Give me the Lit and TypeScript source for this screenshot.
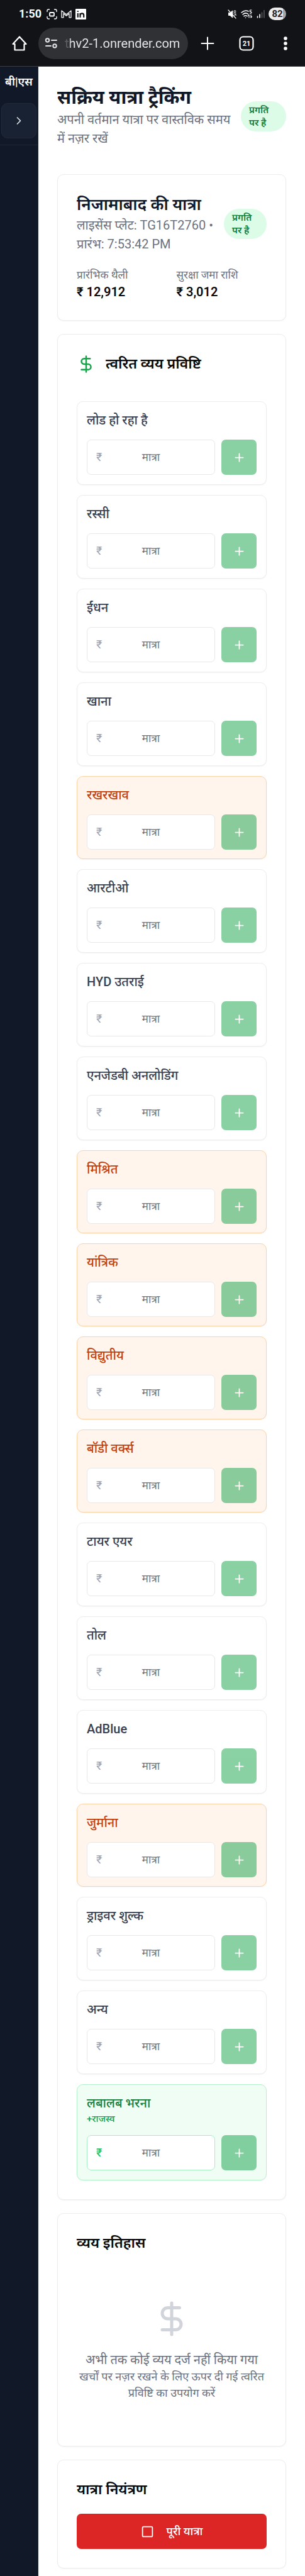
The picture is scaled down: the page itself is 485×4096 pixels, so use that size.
import { LitElement, html, css, svg, nothing } from "lit";
import { customElement, property } from "lit/decorators.js";

type Tone = "plain" | "warn" | "gain";

interface Expense {
  name: string;
  tone: Tone;
  note?: string;
}

const EXPENSES: Expense[] = [
  { name: "लोड हो रहा है", tone: "plain" },
  { name: "रस्सी", tone: "plain" },
  { name: "ईंधन", tone: "plain" },
  { name: "खाना", tone: "plain" },
  { name: "रखरखाव", tone: "warn" },
  { name: "आरटीओ", tone: "plain" },
  { name: "HYD उतराई", tone: "plain" },
  { name: "एनजेडबी अनलोडिंग", tone: "plain" },
  { name: "मिश्रित", tone: "warn" },
  { name: "यांत्रिक", tone: "warn" },
  { name: "विद्युतीय", tone: "warn" },
  { name: "बॉडी वर्क्स", tone: "warn" },
  { name: "टायर एयर", tone: "plain" },
  { name: "तोल", tone: "plain" },
  { name: "AdBlue", tone: "plain" },
  { name: "जुर्माना", tone: "warn" },
  { name: "ड्राइवर शुल्क", tone: "plain" },
  { name: "अन्य", tone: "plain" },
  { name: "लबालब भरना", tone: "gain", note: "+राजस्व" },
];

const dollarShape = svg`<path d="M12 2v20M17 5H9.5a3.5 3.5 0 0 0 0 7h5a3.5 3.5 0 0 1 0 7H6"></path>`;

const base = css`
  * {
    box-sizing: border-box;
    margin: 0;
  }
  button,
  input {
    font: inherit;
    color: inherit;
    border: 0;
    padding: 0;
    background: none;
    min-width: 0;
  }
  svg {
    display: block;
    fill: none;
    stroke: currentColor;
    stroke-width: 2;
    stroke-linecap: round;
    stroke-linejoin: round;
    flex: none;
  }
`;

@customElement("phone-chrome")
export class PhoneChrome extends LitElement {
  static styles = [
    base,
    css`
      :host {
        display: block;
        background: #111317;
        color: #fff;
        border-bottom: 1px solid #3b3d42;
      }
      .status {
        display: flex;
        align-items: center;
        height: 44px;
        padding: 0 30px;
        gap: 6px;
      }
      .time {
        margin-right: 2px;
        font-size: 18px;
        line-height: 24px;
        font-weight: 700;
      }
      .space {
        flex: 1;
      }
      .battery {
        display: flex;
        align-items: center;
        justify-content: center;
        width: 28px;
        height: 20px;
        border-radius: 10px;
        background: linear-gradient(90deg, #ececec 82%, #a5a5a8 82%);
        color: #222326;
        font-size: 15px;
        line-height: 20px;
        font-weight: 700;
      }
      .bar {
        display: flex;
        align-items: center;
        height: 61px;
        padding-bottom: 11px;
      }
      .bar button {
        display: flex;
        justify-content: center;
        flex: 0 0 62px;
      }
      .bar .home {
        flex-basis: 61px;
      }
      .address {
        flex: 1;
        min-width: 0;
        display: flex;
        align-items: center;
        gap: 11px;
        height: 50px;
        padding: 0 10px;
        border-radius: 25px;
        background: #303135;
        color: #e4e4e7;
      }
      .url {
        flex: 1;
        font-size: 20px;
        line-height: 24px;
        -webkit-mask-image: linear-gradient(90deg, rgba(0, 0, 0, 0.25) 5px, #000 10px);
        mask-image: linear-gradient(90deg, rgba(0, 0, 0, 0.25) 5px, #000 10px);
      }
      .tabs text {
        fill: currentColor;
        stroke: none;
        font-size: 11px;
        font-weight: 700;
      }
    `,
  ];

  render() {
    return html`
      <div class="status">
        <span class="time">1:50</span>
        <svg width="17" height="17" viewBox="0 0 17 17">
          <path d="M1 4.5V3a2 2 0 0 1 2-2h1.5M12.500 1H14a2 2 0 0 1 2 2v1.5M16 12.500V14a2 2 0 0 1-2 2h-1.5M4.5 16H3a2 2 0 0 1-2-2v-1.5" stroke-width="1.4"></path>
          <rect x="5" y="6" width="7" height="5.5" rx="1" stroke-width="1.8"></rect>
        </svg>
        <svg width="17" height="14" viewBox="0 0 17 14">
          <path d="M1 12.8V2l7.5 6L16 2v10.8h-3V6.5l-4.5 3.7L4 6.500v6.3z" stroke-width="1.3"></path>
        </svg>
        <svg width="17" height="17" viewBox="0 0 17 17">
          <rect width="17" height="17" rx="1" fill="#fff" stroke="none"></rect>
          <path d="M3.8 7v6.800M3.8 3.300v1.6M7.5 13.800V7M7.5 10c0-3.600 5.700-3.600 5.700 0v3.800" stroke="#111317" stroke-width="2.2" stroke-linecap="butt"></path>
        </svg>
        <span class="space"></span>
        <svg width="15" height="15" viewBox="0 0 15 15">
          <path d="M1.5 5.500v4h2.300l4 3.500V2l-4 3.500z" fill="#fff" stroke-width="1"></path>
          <path d="M1 1l12 13M10 3l1.500-1 1.500 1M10 6l1.500-1L13 6M11 9l1-1 1.500 1" stroke-width="1.2"></path>
        </svg>
        <svg width="19" height="15" viewBox="0 0 19 15">
          <path d="M1 5c4-3.500 8-3.500 11-2M3 8c2.500-2.300 6-2.500 8.500-.7M5 10.700c1.500-1.200 3.500-1.200 5 0M7.500 13.200v.1" stroke-width="1.5"></path>
          <path d="M17 1h-2.500v2.500c3-.6 3.600 3 0 2.700M13 13V8.500l-1.300 1.300M16 8.500V13l1.500-1.500" stroke-width="1.2"></path>
        </svg>
        <svg width="13" height="14" viewBox="0 0 13 14">
          <path d="M1.500 11v2M5 8v5" stroke-width="1.6"></path>
          <path d="M8.500 5v8M12 1.500V13" stroke-width="1.6" stroke="#55575b"></path>
        </svg>
        <span class="battery">82</span>
      </div>
      <div class="bar">
        <button class="home" aria-label="होम">
          <svg width="24" height="24" viewBox="0 0 24 24">
            <path d="M1.500 13 12 1.500l10.500 11.500h-3v9.500h-15V13z" stroke-width="2.2"></path>
          </svg>
        </button>
        <div class="address">
          <svg width="21" height="18" viewBox="0 0 21 18">
            <circle cx="4.5" cy="4" r="2.7"></circle>
            <path d="M11 4h8M2 13h8"></path>
            <circle cx="16" cy="13" r="2.7"></circle>
          </svg>
          <input class="url" aria-label="पता" value="thv2-1.onrender.com" readonly />
        </div>
        <button aria-label="नया टैब">
          <svg width="22" height="22" viewBox="0 0 22 22"><path d="M11 1.500v19M1.500 11h19"></path></svg>
        </button>
        <button class="tabs" aria-label="टैब">
          <svg width="24" height="24" viewBox="0 0 24 24">
            <rect x="1.500" y="1.500" width="21" height="21" rx="5" stroke-width="2.2"></rect>
            <text x="12" y="16" text-anchor="middle">21</text>
          </svg>
        </button>
        <button aria-label="मेनू">
          <svg width="6" height="22" viewBox="0 0 6 22">
            <path d="M3 3v.01M3 11v.01M3 19v.01" stroke-width="5.6"></path>
          </svg>
        </button>
      </div>
    `;
  }
}

@customElement("expense-entry")
export class ExpenseEntry extends LitElement {
  @property({ attribute: false }) expense!: Expense;

  static styles = [
    base,
    css`
      :host {
        display: block;
      }
      .entry {
        padding: 15px;
        border: 1px solid #ededf0;
        border-radius: 10px;
        background: #fff;
        box-shadow: 0 1px 2px rgba(0, 0, 0, 0.05);
        color: #374151;
      }
      .warn {
        padding-bottom: 14px;
        border-color: #fbd3a6;
        background: #fff5ec;
        color: #c2410c;
      }
      .gain {
        border-color: #b4f3cb;
        background: #effdf4;
        color: #15803d;
      }
      label {
        display: block;
        font-size: 20px;
        line-height: 29px;
        font-weight: 500;
      }
      .note {
        font-size: 15px;
        line-height: 20px;
        font-weight: 500;
        color: #16a34a;
      }
      .row {
        display: flex;
        gap: 10px;
        margin-top: 16px;
      }
      .field {
        flex: 1;
        min-width: 0;
        height: 56px;
        display: grid;
        align-items: center;
        border: 1px solid #e8e8eb;
        border-radius: 7px;
        background: #fff;
      }
      .gain .field {
        border-color: #a7efc3;
      }
      .field > * {
        grid-area: 1 / 1;
      }
      .sign {
        padding-left: 14px;
        font-size: 18px;
        line-height: 26px;
        color: #9ca3af;
      }
      .gain .sign {
        color: #22c55e;
        font-weight: 500;
      }
      input {
        width: 100%;
        height: 54px;
        text-align: center;
        font-size: 17px;
        color: #111827;
      }
      input::placeholder {
        color: #757575;
        opacity: 1;
      }
      button {
        display: grid;
        place-items: center;
        flex: 0 0 56px;
        height: 56px;
        border-radius: 7px;
        background: #16a34a;
        color: #fff;
        opacity: 0.5;
      }
    `,
  ];

  render() {
    const { name, tone, note } = this.expense;
    return html`
      <div class="entry ${tone}">
        <label for="amount">${name}</label>
        ${note ? html`<p class="note">${note}</p>` : nothing}
        <div class="row">
          <div class="field">
            <span class="sign">₹</span>
            <input id="amount" inputmode="decimal" placeholder="मात्रा" />
          </div>
          <button aria-label="जोड़ें" disabled>
            <svg width="21" height="21" viewBox="0 0 24 24"><path d="M5 12h14M12 5v14"></path></svg>
          </button>
        </div>
      </div>
    `;
  }
}

@customElement("app-root")
export class AppRoot extends LitElement {
  static styles = [
    base,
    css`
      :host {
        display: flex;
        flex-direction: column;
        min-height: 100vh;
        background: #fff;
        color: #0a0a0a;
        font-family: Roboto, "Noto Sans Devanagari", "Noto Sans", sans-serif;
      }
      .shell {
        flex: 1;
        display: flex;
      }
      aside {
        flex: 0 0 61px;
        background: #111827;
        color: #fff;
        border-right: 1px solid #1f2937;
      }
      .side-top {
        height: 125px;
        padding: 10px 2px 0;
        display: flex;
        flex-direction: column;
        align-items: stretch;
        gap: 20px;
        border-bottom: 1px solid #1f2937;
      }
      .brand {
        font-size: 18px;
        line-height: 28px;
        font-weight: 600;
        text-align: center;
        white-space: nowrap;
      }
      .expand {
        display: grid;
        place-items: center;
        height: 56px;
        border: 1px solid #1f2b3b;
        border-radius: 10px;
        background: #182232;
        color: #e5e7eb;
      }
      main {
        flex: 1;
        min-width: 0;
        display: flex;
        flex-direction: column;
        gap: 21px;
        padding: 29px 30px 11px;
      }
      .page-head,
      .trip-head {
        display: flex;
        align-items: center;
        justify-content: space-between;
      }
      .page-head {
        margin-bottom: 21px;
      }
      h1 {
        font-size: 30px;
        line-height: 40px;
        font-weight: 700;
        color: #111827;
      }
      .sub {
        font-size: 20px;
        line-height: 30px;
        color: #6b7280;
      }
      .badge {
        flex: 0 0 72px;
        padding: 4px 13px;
        border-radius: 24px;
        background: #dcfce7;
        color: #15803d;
        font-size: 15px;
        line-height: 20px;
        font-weight: 600;
      }
      .trip-head .badge {
        flex-basis: 68px;
      }
      .card {
        padding: 30px;
        border: 1px solid #ededf0;
        border-radius: 10px;
        background: #fff;
        box-shadow: 0 1px 2px rgba(0, 0, 0, 0.05);
      }
      h2 {
        font-size: 23px;
        line-height: 34px;
        font-weight: 600;
      }
      .trip-head h2 {
        font-size: 26px;
        line-height: 35px;
        color: #111827;
      }
      .figures {
        display: grid;
        grid-template-columns: 1fr 1fr;
        gap: 15px;
        margin-top: 21px;
      }
      dt {
        font-size: 17px;
        line-height: 26px;
        color: #6b7280;
      }
      dd {
        font-size: 20px;
        line-height: 29px;
        font-weight: 600;
      }
      .quick-head {
        display: flex;
        align-items: center;
        gap: 16px;
        margin-bottom: 42px;
        color: #16a34a;
      }
      .quick-head h2 {
        color: #0a0a0a;
      }
      .entries {
        display: grid;
        gap: 16px;
      }
      .empty {
        display: flex;
        flex-direction: column;
        align-items: center;
        padding: 73px 0 41px;
        text-align: center;
        color: #6b7280;
      }
      .empty svg {
        color: #d1d5db;
        margin-bottom: 21px;
      }
      .lead {
        font-size: 20px;
        line-height: 28px;
      }
      .hint {
        font-size: 18px;
        line-height: 26px;
      }
      .finish {
        display: flex;
        align-items: center;
        justify-content: center;
        gap: 20px;
        width: 100%;
        height: 56px;
        margin-top: 21px;
        border-radius: 7px;
        background: #dc2626;
        color: #fff;
        font-size: 18px;
        line-height: 26px;
        font-weight: 500;
      }
    `,
  ];

  render() {
    return html`
      <phone-chrome></phone-chrome>
      <div class="shell">
        <aside>
          <div class="side-top">
            <div class="brand">बी|एस</div>
            <button class="expand" aria-label="मेनू खोलें">
              <svg width="20" height="20" viewBox="0 0 24 24"><path d="m9 18 6-6-6-6"></path></svg>
            </button>
          </div>
        </aside>
        <main>
          <header class="page-head">
            <div>
              <h1>सक्रिय यात्रा ट्रैकिंग</h1>
              <p class="sub">अपनी वर्तमान यात्रा पर वास्तविक समय में नज़र रखें</p>
            </div>
            <span class="badge">प्रगति पर है</span>
          </header>

          <section class="card">
            <div class="trip-head">
              <div>
                <h2>निजामाबाद की यात्रा</h2>
                <p class="sub">लाइसेंस प्लेट: TG16T2760 • प्रारंभ: 7:53:42 PM</p>
              </div>
              <span class="badge">प्रगति पर है</span>
            </div>
            <dl class="figures">
              <div>
                <dt>प्रारंभिक थैली</dt>
                <dd>₹ 12,912</dd>
              </div>
              <div>
                <dt>सुरक्षा जमा राशि</dt>
                <dd>₹ 3,012</dd>
              </div>
            </dl>
          </section>

          <section class="card">
            <div class="quick-head">
              <svg width="30" height="30" viewBox="0 0 24 24">${dollarShape}</svg>
              <h2>त्वरित व्यय प्रविष्टि</h2>
            </div>
            <div class="entries">
              ${EXPENSES.map((e) => html`<expense-entry .expense=${e}></expense-entry>`)}
            </div>
          </section>

          <section class="card">
            <h2>व्यय इतिहास</h2>
            <div class="empty">
              <svg width="60" height="60" viewBox="0 0 24 24">${dollarShape}</svg>
              <p class="lead">अभी तक कोई व्यय दर्ज नहीं किया गया</p>
              <p class="hint">खर्चों पर नज़र रखने के लिए ऊपर दी गई त्वरित प्रविष्टि का उपयोग करें</p>
            </div>
          </section>

          <section class="card">
            <h2>यात्रा नियंत्रण</h2>
            <button class="finish">
              <svg width="21" height="21" viewBox="0 0 24 24"><rect x="3" y="3" width="18" height="18" rx="2"></rect></svg>
              पूरी यात्रा
            </button>
          </section>
        </main>
      </div>
    `;
  }
}
